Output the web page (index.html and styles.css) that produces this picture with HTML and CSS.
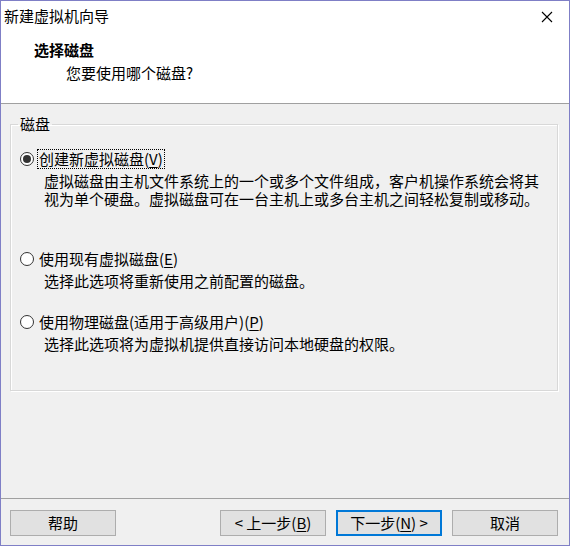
FILE: index.html
```html
<!DOCTYPE html>
<html lang="zh-CN">
<head>
<meta charset="utf-8">
<title>新建虚拟机向导</title>
<link rel="stylesheet" href="styles.css">
</head>
<body>
<div class="window">
  <div class="titlebar">
    <span class="title">新建虚拟机向导</span>
    <span class="close"><svg width="12" height="12" viewBox="0 0 12 12"><path d="M1 1 L11 11 M11 1 L1 11" stroke="#000" stroke-width="1.1" fill="none"/></svg></span>
  </div>
  <div class="header">
    <div class="heading">选择磁盘</div>
    <div class="subheading">您要使用哪个磁盘?</div>
  </div>
  <div class="main">
    <fieldset class="group">
      <legend class="legend">磁盘</legend>
      <div class="option first">
        <div class="opt-label"><span class="radio checked"></span><span class="focus">创建新虚拟磁盘(<u>V</u>)</span></div>
        <div class="desc"><div class="line">虚拟磁盘由主机文件系统上的一个或多个文件组成，客户机操作系统会将其</div><div class="line">视为单个硬盘。虚拟磁盘可在一台主机上或多台主机之间轻松复制或移动。</div></div>
      </div>
      <div class="option second">
        <div class="opt-label"><span class="radio"></span><span class="txt">使用现有虚拟磁盘(<u>E</u>)</span></div>
        <div class="desc"><div class="line">选择此选项将重新使用之前配置的磁盘。</div></div>
      </div>
      <div class="option third">
        <div class="opt-label"><span class="radio"></span><span class="txt">使用物理磁盘(适用于高级用户)(<u>P</u>)</span></div>
        <div class="desc"><div class="line">选择此选项将为虚拟机提供直接访问本地硬盘的权限。</div></div>
      </div>
    </fieldset>
  </div>
  <div class="footer">
    <button class="btn">帮助</button>
    <div class="spacer"></div>
    <button class="btn">&lt; 上一步(<u>B</u>)</button>
    <button class="btn default">下一步(<u>N</u>) &gt;</button>
    <button class="btn">取消</button>
  </div>
</div>
</body>
</html>
```
FILE: styles.css
```css
html, body {
  margin: 0;
  padding: 0;
}
body {
  font-family: "Noto Sans CJK SC", "Microsoft YaHei", sans-serif;
  font-size: 15px;
  color: #000;
}
.window {
  width: 570px;
  height: 546px;
  box-sizing: border-box;
  border: 1px solid #7f7fc6;
  background: #f0f0f0;
  display: flex;
  flex-direction: column;
}
.titlebar {
  height: 29px;
  background: #fff;
  display: flex;
  align-items: center;
  justify-content: space-between;
  padding-left: 3px;
  padding-right: 16px;
}
.title {
  line-height: 18px;
  padding-top: 1px;
}
.close {
  display: flex;
  width: 12px;
  height: 12px;
  margin-top: 2px;
}
.header {
  height: 73px;
  background: #fff;
  border-bottom: 1px solid #a0a0a0;
  box-sizing: content-box;
  padding-left: 33px;
}
.heading {
  font-weight: bold;
  line-height: 18px;
  margin-top: 11px;
}
.subheading {
  line-height: 18px;
  margin-top: 5px;
  padding-left: 32px;
}
.main {
  flex: 1;
  padding: 11px 11px 0 9px;
}
.group {
  margin: 0;
  border: 1px solid #d8d8d8;
  box-shadow: inset 1px 1px 0 #fff, 1px 1px 0 #fff;
  padding: 0 0 37px 9px;
  min-width: 0;
}
.legend {
  padding: 0 2px;
  margin-left: -2px;
  line-height: 18px;
}
.option.first {
  margin-top: 16px;
}
.option.second {
  margin-top: 41px;
}
.option.third {
  margin-top: 22px;
}
.opt-label {
  display: flex;
  align-items: center;
  height: 20px;
  line-height: 18px;
}
.radio {
  width: 12px;
  height: 12px;
  border: 1px solid #333;
  border-radius: 50%;
  background: #fff;
  margin-right: 4px;
  display: flex;
  align-items: center;
  justify-content: center;
  flex-shrink: 0;
}
.radio.checked::after {
  content: "";
  width: 8px;
  height: 8px;
  border-radius: 50%;
  background: #333;
}
.focus {
  outline: 1px dotted #000;
  outline-offset: 0;
  padding: 0 1px;
  line-height: 18px;
}
.txt {
  padding: 0 1px;
}
.desc {
  margin-top: 3px;
  padding-left: 24px;
}
.line {
  height: 18px;
  line-height: 18px;
  white-space: nowrap;
}
.footer {
  height: 47px;
  box-sizing: border-box;
  border-top: 1px solid #a0a0a0;
  display: flex;
  align-items: flex-start;
  padding: 11px 11px 0 9px;
  gap: 10px;
}
.spacer {
  flex: 1;
}
.btn {
  width: 106px;
  height: 26px;
  box-sizing: border-box;
  border: 1px solid #adadad;
  background: #e1e1e1;
  font-family: inherit;
  font-size: 15px;
  color: #000;
  padding: 0;
  line-height: 18px;
}
.btn.default {
  border: 2px solid #0078d7;
}
u {
  text-decoration: underline;
  text-underline-offset: 2px;
}
```
